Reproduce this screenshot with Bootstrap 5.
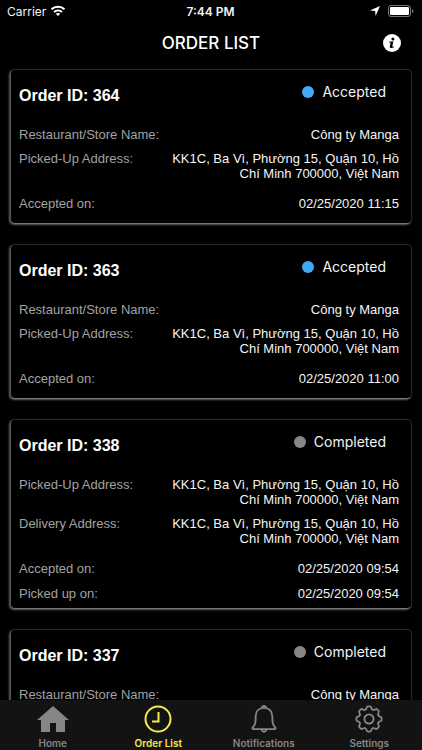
<!DOCTYPE html>
<html lang="en">
<head>
<meta charset="utf-8">
<meta name="viewport" content="width=device-width, initial-scale=1">
<title>Order List</title>
<link href="https://cdn.jsdelivr.net/npm/bootstrap@5.3.0/dist/css/bootstrap.min.css" rel="stylesheet">
<style>
body{background:#000;color:#f4f4f4;font-family:"Liberation Sans",Arial,sans-serif;font-size:13px;line-height:15px}
.ui-font{font-family:Inter,sans-serif}
.status-bar{height:22px;font-size:12px;padding:0 8px 0 7px}
.status-bar>*{flex:1 1 0}
.title-bar{height:42px;padding:0 21px}
.title-bar h1{font-size:17px;line-height:20px;font-weight:500;color:#fff}
.info-btn{width:18px;height:18px}
.order-list{padding:5px 10px 0;gap:20px}
.order-card{background:#000;border:1px solid #262626;border-left:1px solid #555;border-bottom:1px solid #777;border-radius:5px;box-shadow:-1px 1px 2px 0 #606060;padding:0 12px 0 8px}
.order-head{height:57px;padding:12px 13px 0 0}
.order-head h2{font-size:16px;line-height:20px;font-weight:700;color:#fff;padding-top:4px}
.order-state{font-size:14px;line-height:20px;gap:8px}
.dot{width:12px;height:12px;border-radius:50%;background:#868686}
.dot-accepted{background:#40aaf5}
.order-card dl>div{padding-bottom:9px}
.order-card dt{font-weight:400;color:#a3a3a3}
.order-card dd{max-width:236px}
.order-card .date-row{padding-top:6px;padding-bottom:12px}
.order-card .date-row+.date-row{padding-top:0;padding-bottom:7px}
.order-card .date-tight{padding-bottom:10px}
.tab-bar{background:#131313;height:50px;font-size:10px;font-weight:600;line-height:12px}
.tab-bar a{color:#868686;padding-top:5px;gap:4px}
.tab-bar a.active{color:#fbe94b}
</style>
<script src="https://cdn.jsdelivr.net/npm/bootstrap@5.3.0/dist/js/bootstrap.bundle.min.js"></script>
</head>
<body>
<div class="vh-100 d-flex flex-column overflow-hidden">
  <div class="status-bar ui-font d-flex align-items-center flex-shrink-0">
    <div class="d-flex align-items-center gap-1"><span>Carrier</span>
      <svg width="16" height="12" viewBox="0 0 16 12" fill="none" stroke="#fff" stroke-width="2" aria-hidden="true"><path d="M1.5 4.3C5 .8 11 .8 14.5 4.3M4 7c2.3-2.1 5.7-2.1 8 0"/><path d="M5.7 8.8c1.3-1.1 3.3-1.1 4.6 0L8 11z" fill="#fff" stroke="none"/></svg>
    </div>
    <div class="text-center fw-semibold">7:44 PM</div>
    <div class="d-flex align-items-center justify-content-end gap-2">
      <svg width="10" height="10" viewBox="0 0 9 9" fill="#fff" aria-hidden="true"><path d="M9 0 5 9 4.6 4.4 0 4z"/></svg>
      <svg width="26" height="12" viewBox="0 0 26 12" aria-hidden="true"><rect x=".5" y=".5" width="22" height="11" rx="2.5" fill="none" stroke="#777"/><rect x="2" y="2" width="19" height="8" rx="1" fill="#fff"/><path d="M24 4c2 .6 2 3.4 0 4z" fill="#777"/></svg>
    </div>
  </div>
  <header class="title-bar ui-font d-flex align-items-center flex-shrink-0">
    <span class="info-btn"></span>
    <h1 class="flex-fill text-center m-0">ORDER LIST</h1>
    <button type="button" class="info-btn btn p-0 border-0 d-flex" aria-label="Information">
      <svg width="18" height="18" viewBox="0 0 18 18" aria-hidden="true"><circle cx="9" cy="9" r="9" fill="#fff"/><circle cx="9.9" cy="4.9" r="1.5" fill="#000"/><path d="M6.3 7.6h4.1L9.2 12.6h1.7l-.3 1c-1.5.7-4.2.8-3.8-1.1l.9-3.9H6.1z" fill="#000"/></svg>
    </button>
  </header>
  <main class="order-list d-flex flex-column flex-fill overflow-hidden">
    <article class="order-card flex-shrink-0">
      <div class="order-head d-flex justify-content-between align-items-start"><h2 class="m-0">Order ID: 364</h2><div class="order-state ui-font d-flex align-items-center"><span class="dot dot-accepted"></span>Accepted</div></div>
      <dl class="m-0">
        <div class="d-flex justify-content-between"><dt>Restaurant/Store Name:</dt><dd class="m-0 text-end">Công ty Manga</dd></div>
        <div class="d-flex justify-content-between"><dt>Picked-Up Address:</dt><dd class="m-0 text-end">KK1C, Ba Vì, Phường 15, Quận 10, Hồ Chí Minh 700000, Việt Nam</dd></div>
        <div class="date-row d-flex justify-content-between"><dt>Accepted on:</dt><dd class="m-0 text-end">02/25/2020 11:15</dd></div>
      </dl>
    </article>
    <article class="order-card flex-shrink-0">
      <div class="order-head d-flex justify-content-between align-items-start"><h2 class="m-0">Order ID: 363</h2><div class="order-state ui-font d-flex align-items-center"><span class="dot dot-accepted"></span>Accepted</div></div>
      <dl class="m-0">
        <div class="d-flex justify-content-between"><dt>Restaurant/Store Name:</dt><dd class="m-0 text-end">Công ty Manga</dd></div>
        <div class="d-flex justify-content-between"><dt>Picked-Up Address:</dt><dd class="m-0 text-end">KK1C, Ba Vì, Phường 15, Quận 10, Hồ Chí Minh 700000, Việt Nam</dd></div>
        <div class="date-row d-flex justify-content-between"><dt>Accepted on:</dt><dd class="m-0 text-end">02/25/2020 11:00</dd></div>
      </dl>
    </article>
    <article class="order-card flex-shrink-0">
      <div class="order-head d-flex justify-content-between align-items-start"><h2 class="m-0">Order ID: 338</h2><div class="order-state ui-font d-flex align-items-center"><span class="dot"></span>Completed</div></div>
      <dl class="m-0">
        <div class="d-flex justify-content-between"><dt>Picked-Up Address:</dt><dd class="m-0 text-end">KK1C, Ba Vì, Phường 15, Quận 10, Hồ Chí Minh 700000, Việt Nam</dd></div>
        <div class="d-flex justify-content-between"><dt>Delivery Address:</dt><dd class="m-0 text-end">KK1C, Ba Vì, Phường 15, Quận 10, Hồ Chí Minh 700000, Việt Nam</dd></div>
        <div class="date-row date-tight d-flex justify-content-between"><dt>Accepted on:</dt><dd class="m-0 text-end">02/25/2020 09:54</dd></div>
        <div class="date-row d-flex justify-content-between"><dt>Picked up on:</dt><dd class="m-0 text-end">02/25/2020 09:54</dd></div>
      </dl>
    </article>
    <article class="order-card flex-shrink-0">
      <div class="order-head d-flex justify-content-between align-items-start"><h2 class="m-0">Order ID: 337</h2><div class="order-state ui-font d-flex align-items-center"><span class="dot"></span>Completed</div></div>
      <dl class="m-0">
        <div class="d-flex justify-content-between"><dt>Restaurant/Store Name:</dt><dd class="m-0 text-end">Công ty Manga</dd></div>
      </dl>
    </article>
  </main>
  <nav class="tab-bar ui-font row g-0 flex-shrink-0" aria-label="Main">
    <a href="#" class="col d-flex flex-column align-items-center text-decoration-none">
      <svg width="34" height="28" viewBox="0 0 34 28" fill="currentColor" aria-hidden="true"><path d="M17 1 1 15h4v12h9v-9h6v9h9V15h4z"/></svg>Home</a>
    <a href="#" class="active col d-flex flex-column align-items-center text-decoration-none" aria-current="page">
      <svg width="28" height="28" viewBox="0 0 28 28" fill="none" stroke="currentColor" stroke-width="2" aria-hidden="true"><circle cx="14" cy="14" r="12.5"/><path d="M14.5 7v9.5H8"/></svg>Order List</a>
    <a href="#" class="col d-flex flex-column align-items-center text-decoration-none">
      <svg width="28" height="28" viewBox="0 0 28 28" fill="none" stroke="currentColor" stroke-width="1.8" stroke-linejoin="round" aria-hidden="true"><path d="M14 2.8c-5 0-8.3 3.3-8.3 8.4 0 6.5-.4 8.3-3 11.4-.6.9-.4 1.5.6 1.5h21.4c1 0 1.2-.6.6-1.5-2.6-3.1-3-4.9-3-11.4 0-5.1-3.3-8.4-8.3-8.4z"/><path d="M12 2.8c-.6-2.4 4.6-2.4 4 0M11.8 24.5c.3 3 4.1 3 4.4 0"/></svg>Notifications</a>
    <a href="#" class="col d-flex flex-column align-items-center text-decoration-none">
      <svg width="28" height="28" viewBox="-14 -14 28 28" fill="none" stroke="currentColor" stroke-width="1.8" stroke-linecap="round" aria-hidden="true"><defs><path id="tooth" d="M-3.83-9.24C-2.9-9.6-2.6-10-2.4-11Q-2.2-12.6-1-12.6H1Q2.2-12.6 2.4-11C2.6-10 2.9-9.6 3.83-9.24"/></defs><circle r="4.6"/><use href="#tooth"/><use href="#tooth" transform="rotate(45)"/><use href="#tooth" transform="rotate(90)"/><use href="#tooth" transform="rotate(135)"/><use href="#tooth" transform="rotate(180)"/><use href="#tooth" transform="rotate(225)"/><use href="#tooth" transform="rotate(270)"/><use href="#tooth" transform="rotate(315)"/></svg>Settings</a>
  </nav>
</div>
</body>
</html>
